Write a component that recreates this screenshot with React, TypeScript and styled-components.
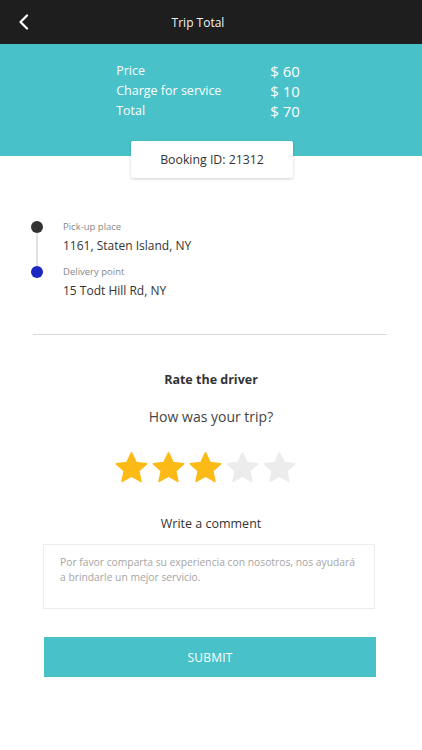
import React from "react";
import styled, { createGlobalStyle } from "styled-components";

const Global = createGlobalStyle`
  html, body { margin: 0; padding: 0; background: #fff; }
  body { font-family: "Open Sans", "Noto Sans", sans-serif; }
  * { box-sizing: border-box; }
`;

const Page = styled.div`
  width: 422px;
  min-height: 750px;
  background: #fff;
  display: flex;
  flex-direction: column;
`;

const TopBar = styled.div`
  height: 44px;
  background: #1e1e1e;
  display: flex;
  align-items: center;
  justify-content: center;
  position: relative;
`;

const Back = styled.button`
  position: absolute;
  left: 14px;
  top: 12px;
  width: 20px;
  height: 20px;
  padding: 0;
  border: 0;
  background: transparent;
  display: flex;
  align-items: center;
  justify-content: center;
`;

const Title = styled.div`
  color: #f2f2f2;
  font-size: 12px;
  margin-left: -26px;
`;

const Hero = styled.div`
  background: #48c1c9;
  height: 112px;
  display: flex;
  justify-content: center;
  padding-top: 17px;
  position: relative;
`;

const PriceTable = styled.div`
  display: grid;
  grid-template-columns: 154px auto;
  color: #fff;
  align-content: start;
  margin-left: -6px;
`;

const Label = styled.div`
  font-size: 12.5px;
  line-height: 20px;
`;

const Value = styled.div`
  font-size: 15px;
  line-height: 20px;
`;

const BookingCard = styled.div`
  position: absolute;
  left: 131px;
  top: 97px;
  width: 162px;
  height: 37px;
  background: #fff;
  box-shadow: 0 1px 3px rgba(0, 0, 0, 0.18);
  border-radius: 2px;
  display: flex;
  align-items: center;
  justify-content: center;
  font-size: 12.3px;
  color: #333;
`;

const Route = styled.div`
  padding: 65px 0 0 31px;
  display: flex;
  flex-direction: column;
`;

const Stop = styled.div`
  display: flex;
  gap: 20px;
  height: 45px;
`;

const Rail = styled.div`
  width: 12px;
  display: flex;
  flex-direction: column;
  align-items: center;
`;

const Dot = styled.div<{ $color: string }>`
  width: 12px;
  height: 12px;
  border-radius: 50%;
  background: ${(p) => p.$color};
  flex-shrink: 0;
`;

const Line = styled.div`
  width: 2px;
  flex: 1;
  background: #e2e2e2;
`;

const StopText = styled.div`
  display: flex;
  flex-direction: column;
  margin-top: -1px;
`;

const StopLabel = styled.div`
  font-size: 9.5px;
  color: #888;
  line-height: 14px;
`;

const StopAddr = styled.div`
  font-size: 12px;
  color: #333;
  line-height: 18px;
  margin-top: 3px;
`;

const Divider = styled.div`
  margin: 23px 35px 0 33px;
  height: 1px;
  background: #dcdcdc;
`;

const Center = styled.div`
  display: flex;
  flex-direction: column;
  align-items: center;
`;

const RateTitle = styled.div`
  margin-top: 36px;
  font-size: 12.5px;
  font-weight: 700;
  color: #333;
  line-height: 18px;
`;

const Question = styled.div`
  margin-top: 18px;
  font-size: 14px;
  color: #444;
  line-height: 20px;
`;

const Stars = styled.div`
  margin-top: 24px;
  display: flex;
  gap: 2px;
  margin-left: -11px;
`;

const CommentTitle = styled.div`
  margin-top: 30px;
  font-size: 12.5px;
  color: #333;
  line-height: 18px;
`;

const Comment = styled.div`
  margin: 11px 47px 0 43px;
  height: 65px;
  border: 1px solid #ececec;
  padding: 10px 14px 0 16px;
  font-size: 10.3px;
  line-height: 15px;
  color: #a5a5a5;
`;

const Submit = styled.button`
  margin: 28px 46px 0 44px;
  height: 40px;
  border: 0;
  background: #48c1c9;
  color: #fff;
  font-family: "Open Sans", "Noto Sans", sans-serif;
  font-size: 12px;
  letter-spacing: 0.2px;
`;

const Star = ({ on }: { on: boolean }) => (
  <svg width="35" height="34" viewBox="0 0 24 23">
    <path
      d="M12 1.2l3.1 6.6 7.2.8-5.4 4.9 1.5 7.1L12 17l-6.4 3.6 1.5-7.1L1.7 8.6l7.2-.8z"
      fill={on ? "#fbba16" : "#ececec"}
      stroke={on ? "#fbba16" : "#ececec"}
      strokeWidth="1.2"
      strokeLinejoin="round"
    />
  </svg>
);

export default function App() {
  return (
    <Page>
      <Global />
      <TopBar>
        <Back aria-label="back">
          <svg width="12" height="16" viewBox="0 0 12 16">
            <path d="M9 1.5L2.5 8 9 14.5" fill="none" stroke="#fff" strokeWidth="2.2" strokeLinecap="round" strokeLinejoin="round" />
          </svg>
        </Back>
        <Title>Trip Total</Title>
      </TopBar>
      <Hero>
        <PriceTable>
          <Label>Price</Label>
          <Value>$ 60</Value>
          <Label>Charge for service</Label>
          <Value>$ 10</Value>
          <Label>Total</Label>
          <Value>$ 70</Value>
        </PriceTable>
        <BookingCard>Booking ID: 21312</BookingCard>
      </Hero>
      <Route>
        <Stop>
          <Rail>
            <Dot $color="#333" />
            <Line />
          </Rail>
          <StopText>
            <StopLabel>Pick-up place</StopLabel>
            <StopAddr>1161, Staten Island, NY</StopAddr>
          </StopText>
        </Stop>
        <Stop>
          <Rail>
            <Dot $color="#1a27c0" />
          </Rail>
          <StopText>
            <StopLabel>Delivery point</StopLabel>
            <StopAddr>15 Todt Hill Rd, NY</StopAddr>
          </StopText>
        </Stop>
      </Route>
      <Divider />
      <Center>
        <RateTitle>Rate the driver</RateTitle>
        <Question>How was your trip?</Question>
        <Stars>
          {[0, 1, 2, 3, 4].map((i) => (
            <Star key={i} on={i < 3} />
          ))}
        </Stars>
        <CommentTitle>Write a comment</CommentTitle>
      </Center>
      <Comment>
        Por favor comparta su experiencia con nosotros, nos ayudará a brindarle un mejor servicio.
      </Comment>
      <Submit>SUBMIT</Submit>
    </Page>
  );
}
